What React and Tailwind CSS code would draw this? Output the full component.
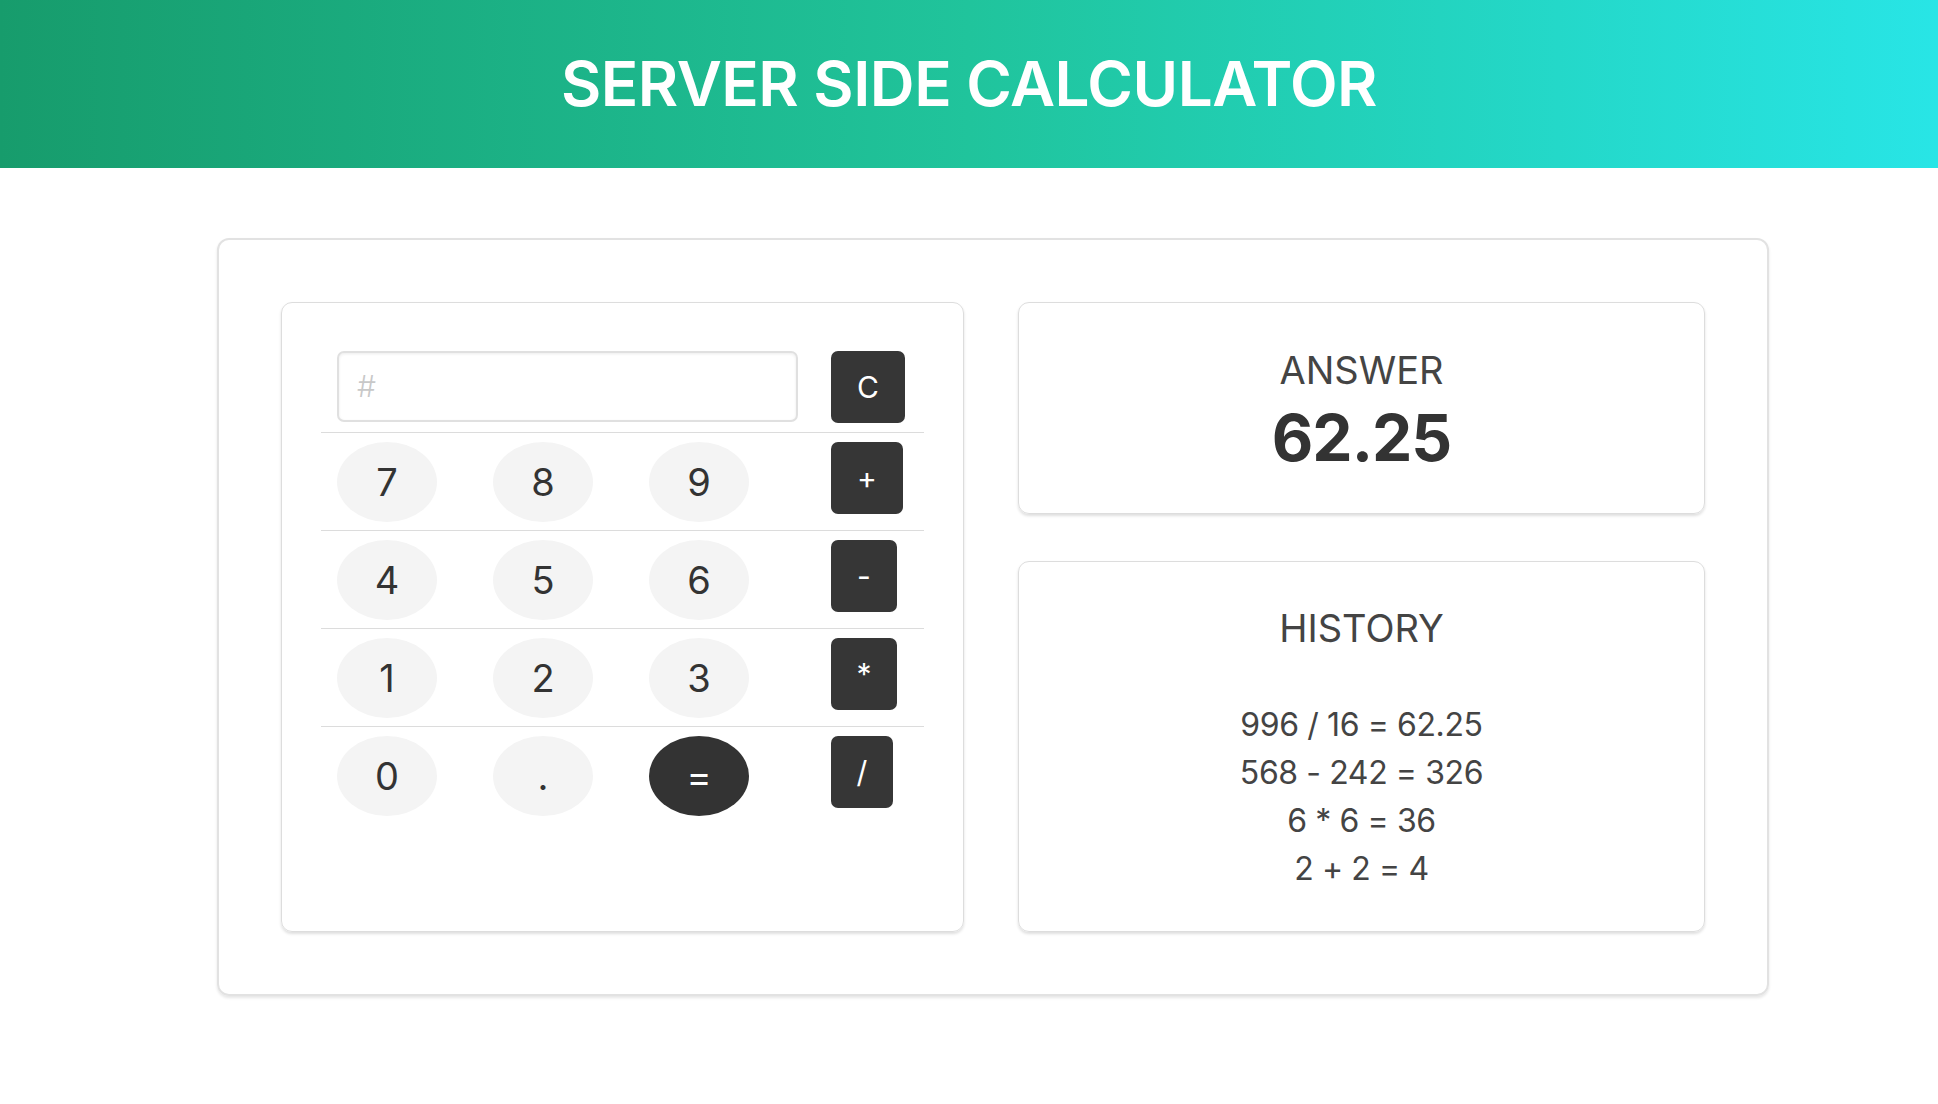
import React from "react";

const font = { fontFamily: "Inter, 'Noto Sans', sans-serif" };

function NumBtn({ children, dark }) {
  return (
    <button
      className={
        "w-[100px] h-[80px] rounded-[50%] flex items-center justify-center text-[38px] leading-none " +
        (dark ? "bg-[#333333] text-white" : "bg-[#f4f4f4] text-[#333333]")
      }
    >
      {children}
    </button>
  );
}

function OpBtn({ children, w }) {
  return (
    <button
      className={
        "h-[72px] rounded-[7px] bg-[#363636] text-white text-[30px] leading-none flex items-center justify-center " +
        w
      }
    >
      {children}
    </button>
  );
}

function Row({ children, first }) {
  return (
    <div
      className={
        "grid grid-cols-[156px_156px_182px_1fr] pl-4 items-start " +
        (first ? "pt-[9px] pb-[9px]" : "border-t border-[#dcdcdc] pt-[9px] pb-[8px]")
      }
    >
      {children}
    </div>
  );
}

export default function App() {
  const history = ["996 / 16 = 62.25", "568 - 242 = 326", "6 * 6 = 36", "2 + 2 = 4"];
  return (
    <div className="min-h-[1104px] bg-white [font-feature-settings:'calt'_0]" style={font}>
      <header className="h-[168px] flex items-center justify-center bg-linear-to-r from-[#179c6c] via-[#20c49c] to-[#28e5e6]">
        <h1 className="text-white text-[62px] font-semibold leading-none tracking-[-0.5px]">
          SERVER SIDE CALCULATOR
        </h1>
      </header>

      <main className="pt-[70px] pb-[107px]">
        <div className="ml-[217px] w-[1552px] border-2 border-[#e2e2e2] rounded-[12px] shadow-[0_2px_3px_rgba(0,0,0,0.10)] p-[62px] grid grid-cols-[683px_687px] gap-x-[54px]">
          {/* Calculator */}
          <div className="h-[630px] border-[1.5px] border-[#dddddd] rounded-[11px] shadow-[0_2px_3px_rgba(0,0,0,0.13)] px-[39px] pt-[39px]">
            <Row first>
              <div className="col-span-3">
                <div className="w-[461px] h-[71px] border-2 border-[#e0e0e0] rounded-[7px] shadow-[inset_0_1px_3px_rgba(0,0,0,0.08)] flex items-center pl-[18px] text-[30px] text-[#c8c8c8] font-light">
                  #
                </div>
              </div>
              <OpBtn w="w-[74px]">C</OpBtn>
            </Row>
            <Row>
              <NumBtn>7</NumBtn>
              <NumBtn>8</NumBtn>
              <NumBtn>9</NumBtn>
              <OpBtn w="w-[72px]">+</OpBtn>
            </Row>
            <Row>
              <NumBtn>4</NumBtn>
              <NumBtn>5</NumBtn>
              <NumBtn>6</NumBtn>
              <OpBtn w="w-[66px]">-</OpBtn>
            </Row>
            <Row>
              <NumBtn>1</NumBtn>
              <NumBtn>2</NumBtn>
              <NumBtn>3</NumBtn>
              <OpBtn w="w-[66px]">*</OpBtn>
            </Row>
            <Row>
              <NumBtn>0</NumBtn>
              <NumBtn>.</NumBtn>
              <NumBtn dark>=</NumBtn>
              <OpBtn w="w-[62px]">/</OpBtn>
            </Row>
          </div>

          {/* Right column */}
          <div className="flex flex-col gap-[47px]">
            <div className="h-[212px] border-[1.5px] border-[#dddddd] rounded-[11px] shadow-[0_2px_3px_rgba(0,0,0,0.13)] flex flex-col items-center pt-[44px]">
              <div className="text-[38px] leading-[46px] text-[#444444]">ANSWER</div>
              <div className="mt-[13px] text-[64px] leading-[64px] font-bold text-[#333333] tracking-[-1px]">62.25</div>
            </div>
            <div className="h-[371px] border-[1.5px] border-[#dddddd] rounded-[11px] shadow-[0_2px_3px_rgba(0,0,0,0.13)] flex flex-col items-center pt-[43px]">
              <div className="text-[38px] leading-[46px] text-[#444444]">HISTORY</div>
              <ul className="mt-[50px] flex flex-col items-center">
                {history.map((h) => (
                  <li key={h} className="text-[32px] leading-[48px] text-[#444444] tracking-[-0.4px]">
                    {h}
                  </li>
                ))}
              </ul>
            </div>
          </div>
        </div>
      </main>
    </div>
  );
}
